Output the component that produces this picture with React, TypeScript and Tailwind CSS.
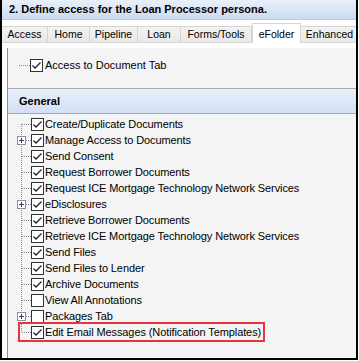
import React from "react";

type Item = { label: string; checked: boolean; expandable?: boolean };

const items: Item[] = [
  { label: "Create/Duplicate Documents", checked: true },
  { label: "Manage Access to Documents", checked: true, expandable: true },
  { label: "Send Consent", checked: true },
  { label: "Request Borrower Documents", checked: true },
  { label: "Request ICE Mortgage Technology Network Services", checked: true },
  { label: "eDisclosures", checked: true, expandable: true },
  { label: "Retrieve Borrower Documents", checked: true },
  { label: "Retrieve ICE Mortgage Technology Network Services", checked: true },
  { label: "Send Files", checked: true },
  { label: "Send Files to Lender", checked: true },
  { label: "Archive Documents", checked: true },
  { label: "View All Annotations", checked: false },
  { label: "Packages Tab", checked: false, expandable: true },
  { label: "Edit Email Messages (Notification Templates)", checked: true },
];

const tabs = [
  { label: "Access", w: "w-[46px]" },
  { label: "Home", w: "w-[42px]" },
  { label: "Pipeline", w: "w-[48px]" },
  { label: "Loan", w: "w-[43px]" },
  { label: "Forms/Tools", w: "w-[71px]" },
  { label: "eFolder", w: "w-[49px]", active: true },
  { label: "Enhanced", w: "w-[58px]" },
];

const Checkbox = ({ checked }: { checked: boolean }) => (
  <svg width="13" height="13" viewBox="0 0 13 13" className="shrink-0">
    <rect x="0.5" y="0.5" width="12" height="12" fill="#fff" stroke="#333" />
    {checked && (
      <path d="M2.5 6.5 L5 9 L10.5 3.5" fill="none" stroke="#222" strokeWidth="1.3" />
    )}
  </svg>
);

// dotted tree connector, 14x16, vertical guide at x=4.5
const Connector = ({ first, last, expandable }: { first: boolean; last: boolean; expandable?: boolean }) => (
  <svg width="14" height="16" viewBox="0 0 14 16" className="shrink-0">
    <line
      x1="4.5"
      x2="4.5"
      y1={first ? 8 : 0}
      y2={last ? 8.5 : 16}
      stroke="#8c8c8c"
      strokeDasharray="1 1"
    />
    <line x1={expandable ? 9 : 5} x2="14" y1="8.5" y2="8.5" stroke="#8c8c8c" strokeDasharray="1 1" />
    {expandable && (
      <g>
        <rect x="0.5" y="4.5" width="8" height="8" fill="#fff" stroke="#919191" />
        <line x1="2" x2="7" y1="8.5" y2="8.5" stroke="#1d3f8c" />
        <line x1="4.5" x2="4.5" y1="6" y2="11" stroke="#1d3f8c" />
      </g>
    )}
  </svg>
);

export default function App() {
  return (
    <div className="relative w-[359px] h-[361px] bg-white text-black font-['Liberation_Sans',Arial,sans-serif] text-[11px] overflow-hidden">
      <div className="w-[358px] h-[360px] border-l-2 border-r-2 border-b-2 border-black flex flex-col">
        {/* title */}
        <div className="h-[20px] shrink-0 flex items-center pl-[7px] font-bold text-[11px] bg-gradient-to-b from-[#e9f0fa] to-[#cbdbf0] border-b border-[#b9cbe4]">
          2. Define access for the Loan Processor persona.
        </div>

        {/* tabs */}
        <div className="h-[23px] shrink-0 flex items-end overflow-hidden bg-white">
          {tabs.map((t) =>
            t.active ? (
              <div
                key={t.label}
                className={`${t.w} shrink-0 h-[20px] bg-white border-t border-l border-r border-[#d5d5d5] flex items-start justify-center pt-[3px] text-[10.5px] whitespace-nowrap`}
              >
                {t.label}
              </div>
            ) : (
              <div
                key={t.label}
                className={`${t.w} shrink-0 h-[17px] bg-gradient-to-b from-[#f3f3f3] to-[#e8e8e8] border-t border-r border-b border-[#d5d5d5] flex items-center justify-center text-[10.5px] whitespace-nowrap overflow-hidden`}
              >
                {t.label}
              </div>
            )
          )}
        </div>

        {/* tab page */}
        <div className="flex-1 bg-white pt-[5px] pl-[5px] flex flex-col min-h-0">
          <div className="flex-1 bg-[#f4f4f4] border-l border-[#8e8e8e] flex flex-col">
            <div className="h-[40px] shrink-0 flex items-start pl-[11px] pt-[11px]">
              <div className="w-[11px] mt-[6px] border-t border-dotted border-[#8c8c8c]" />
              <Checkbox checked />
              <span className="ml-[2px] leading-[13px]">Access to Document Tab</span>
            </div>

            <div className="h-[26px] shrink-0 flex items-center pl-[11px] font-bold bg-gradient-to-b from-[#e8f0fb] to-[#d2e0f4] border-t border-b border-[#a9a9a9]">
              General
            </div>

            <div className="pt-[2px] pl-[9px] flex flex-col tracking-[-0.1px]">
              {items.map((it, i) => (
                <div key={it.label} className="h-[16px] flex items-center">
                  <Connector first={i === 0} last={i === items.length - 1} expandable={it.expandable} />
                  <Checkbox checked={it.checked} />
                  <span className="ml-[1px] whitespace-nowrap leading-[16px]">{it.label}</span>
                </div>
              ))}
            </div>
          </div>
        </div>
      </div>

      {/* highlight annotation */}
      <div className="absolute left-[18px] top-[322px] w-[247px] h-[20px] border-2 border-[#e8343c]" />
    </div>
  );
}
